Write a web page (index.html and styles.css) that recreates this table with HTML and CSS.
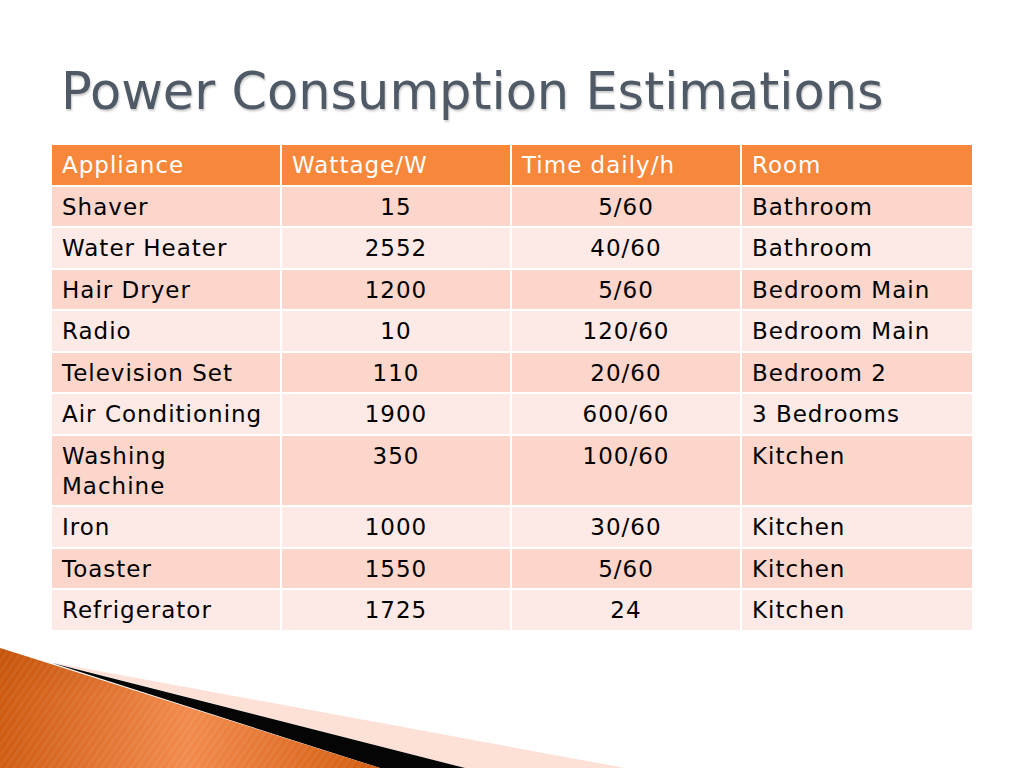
FILE: index.html
```html
<!DOCTYPE html>
<html>
<head>
<meta charset="utf-8">
<link rel="stylesheet" href="styles.css">
</head>
<body>
<div class="slide">
  <h1 class="title">Power Consumption Estimations</h1>
  <table class="grid">
    <thead>
      <tr><th>Appliance</th><th>Wattage/W</th><th>Time daily/h</th><th>Room</th></tr>
    </thead>
    <tbody>
      <tr><td>Shaver</td><td class="c">15</td><td class="c">5/60</td><td>Bathroom</td></tr>
      <tr><td>Water Heater</td><td class="c">2552</td><td class="c">40/60</td><td>Bathroom</td></tr>
      <tr><td>Hair Dryer</td><td class="c">1200</td><td class="c">5/60</td><td>Bedroom Main</td></tr>
      <tr><td>Radio</td><td class="c">10</td><td class="c">120/60</td><td>Bedroom Main</td></tr>
      <tr><td>Television Set</td><td class="c">110</td><td class="c">20/60</td><td>Bedroom 2</td></tr>
      <tr><td>Air Conditioning</td><td class="c">1900</td><td class="c">600/60</td><td>3 Bedrooms</td></tr>
      <tr><td>Washing<br>Machine</td><td class="c">350</td><td class="c">100/60</td><td>Kitchen</td></tr>
      <tr><td>Iron</td><td class="c">1000</td><td class="c">30/60</td><td>Kitchen</td></tr>
      <tr><td>Toaster</td><td class="c">1550</td><td class="c">5/60</td><td>Kitchen</td></tr>
      <tr><td>Refrigerator</td><td class="c">1725</td><td class="c">24</td><td>Kitchen</td></tr>
    </tbody>
  </table>
  <svg class="deco" width="640" height="130" viewBox="0 638 640 130" xmlns="http://www.w3.org/2000/svg">
    <defs>
      <linearGradient id="og" gradientUnits="userSpaceOnUse" x1="0" y1="700" x2="380" y2="740">
        <stop offset="0" stop-color="#cd5a10"/>
        <stop offset="0.5" stop-color="#f28a4c"/>
        <stop offset="1" stop-color="#d25c0e"/>
      </linearGradient>
      <linearGradient id="shade" x1="0" y1="0" x2="0" y2="1">
        <stop offset="0" stop-color="#b84a05" stop-opacity="0.35"/>
        <stop offset="0.4" stop-color="#b84a05" stop-opacity="0"/>
      </linearGradient>
      <pattern id="stripes" width="6" height="6" patternUnits="userSpaceOnUse" patternTransform="rotate(35)">
        <rect width="3" height="6" fill="#ffffff" opacity="0.06"/>
      </pattern>
    </defs>
    <polygon points="50,662 625,768 465,768" fill="#fde0d6"/>
    <polygon points="52,663 465,768 380,768" fill="#050505"/>
    <polygon points="0,648 380,768 0,768" fill="url(#og)"/>
    <polygon points="0,648 380,768 0,768" fill="url(#shade)"/>
    <polygon points="0,648 380,768 0,768" fill="url(#stripes)"/>
  </svg>
</div>
</body>
</html>
```
FILE: styles.css
```css
html, body {
  margin: 0;
  padding: 0;
  background: #ffffff;
}
.slide {
  position: relative;
  width: 1024px;
  height: 768px;
  overflow: hidden;
  padding: 0 52px;
  box-sizing: border-box;
}
.title {
  margin: 0;
  padding: 62px 0 0 9px;
  height: 145px;
  box-sizing: border-box;
  font-family: "DejaVu Sans", sans-serif;
  font-weight: normal;
  font-size: 51px;
  line-height: 60px;
  color: #4f5a66;
  text-shadow: 1px 2px 2px rgba(0,0,0,0.2);
  white-space: nowrap;
}
.grid {
  width: 920px;
  border-collapse: separate;
  border-spacing: 0;
  table-layout: fixed;
  font-family: "DejaVu Sans", sans-serif;
  font-size: 23px;
  letter-spacing: 1px;
  color: #000000;
}
.grid th, .grid td {
  padding: 5px 10px 4.5px;
  line-height: 30px;
  vertical-align: top;
  text-align: left;
  white-space: nowrap;
  border-right: 2px solid #ffffff;
  border-bottom: 2px solid #ffffff;
}
.grid th:last-child, .grid td:last-child {
  border-right: none;
}
.grid th {
  background: #f6873b;
  color: #ffffff;
  font-weight: normal;
}
.grid tbody tr:nth-child(odd) td {
  background: #fcd5cb;
}
.grid tbody tr:nth-child(even) td {
  background: #fde9e6;
}
.grid td.c {
  text-align: center;
}
.deco {
  position: absolute;
  left: 0;
  bottom: 0;
}
```
